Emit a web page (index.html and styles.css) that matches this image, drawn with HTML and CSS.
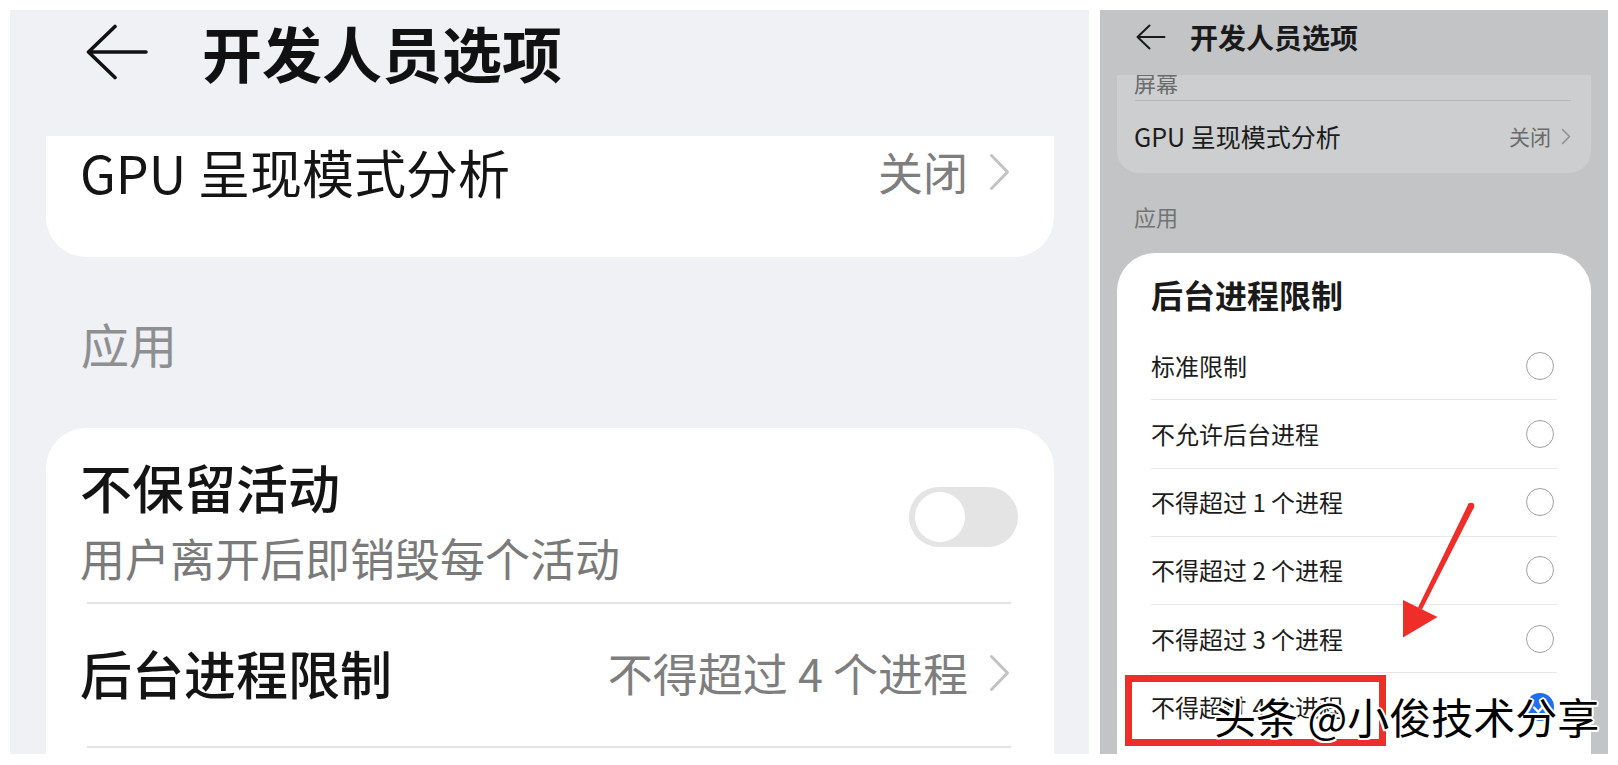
FILE: index.html
```html
<!DOCTYPE html>
<html lang="zh-CN">
<head>
<meta charset="utf-8">
<title>开发人员选项</title>
<link rel="stylesheet" href="styles.css">
</head>
<body>
<div class="screen">
  <section class="panel panel-left">
    <header class="topbar-l">
      <svg class="back-l" viewBox="0 0 62 56" width="62" height="56"><path d="M2.5 28 L29 2.5 M2.5 28 L29 53.5 M2.5 28 L60 28" fill="none" stroke="#111" stroke-width="3.6" stroke-linecap="round" stroke-linejoin="round"/></svg>
      <h1 class="title-l">开发人员选项</h1>
    </header>
    <div class="card-l card-gpu">
      <div class="row-l row-gpu">
        <span class="label-l">GPU 呈现模式分析</span>
        <span class="value-l">关闭</span>
        <svg class="chev-l" viewBox="0 0 23 38" width="23" height="38"><path d="M3.5 2.5 L19.5 19 L3.5 35.5" fill="none" stroke="#c3c3c3" stroke-width="3" stroke-linecap="round" stroke-linejoin="round"/></svg>
      </div>
    </div>
    <div class="section-l">应用</div>
    <div class="card-l card-apps">
      <div class="row-toggle">
        <div class="texts">
          <div class="t-title">不保留活动</div>
          <div class="t-sub">用户离开后即销毁每个活动</div>
        </div>
        <div class="switch"><span class="knob"></span></div>
      </div>
      <div class="divider-l"></div>
      <div class="row-l row-limit">
        <span class="label-l t-medium">后台进程限制</span>
        <span class="value-l">不得超过 4 个进程</span>
        <svg class="chev-l" viewBox="0 0 23 38" width="23" height="38"><path d="M3.5 2.5 L19.5 19 L3.5 35.5" fill="none" stroke="#c3c3c3" stroke-width="3" stroke-linecap="round" stroke-linejoin="round"/></svg>
      </div>
      <div class="divider-l"></div>
    </div>
  </section>

  <section class="panel panel-right">
    <header class="topbar-r">
      <svg class="back-r" viewBox="0 0 30 26" width="30" height="26"><path d="M1.5 13 L13.5 1.5 M1.5 13 L13.5 24.5 M1.5 13 L28.5 13" fill="none" stroke="#1a1a1a" stroke-width="2" stroke-linecap="round" stroke-linejoin="round"/></svg>
      <h1 class="title-r">开发人员选项</h1>
    </header>
    <div class="card-r1">
      <div class="cap-r">屏幕</div>
      <div class="divider-r"></div>
      <div class="row-r">
        <span class="label-r">GPU 呈现模式分析</span>
        <span class="value-r">关闭</span>
        <svg class="chev-r" viewBox="0 0 10 17" width="10" height="17"><path d="M1.5 1.5 L8.5 8.5 L1.5 15.5" fill="none" stroke="#8f9092" stroke-width="1.6" stroke-linecap="round" stroke-linejoin="round"/></svg>
      </div>
    </div>
    <div class="section-r">应用</div>
    <div class="dialog">
      <div class="d-title">后台进程限制</div>
      <div class="opt"><span>标准限制</span><span class="radio"></span></div>
      <div class="opt"><span>不允许后台进程</span><span class="radio"></span></div>
      <div class="opt"><span>不得超过 1 个进程</span><span class="radio"></span></div>
      <div class="opt"><span>不得超过 2 个进程</span><span class="radio"></span></div>
      <div class="opt"><span>不得超过 3 个进程</span><span class="radio"></span></div>
      <div class="opt opt-last"><span>不得超过 4 个进程</span><span class="radio radio-on"><svg viewBox="0 0 28 28" width="28" height="28"><path d="M8 14.5 L12.3 18.8 L20.5 10" fill="none" stroke="#fff" stroke-width="2.4" stroke-linecap="round" stroke-linejoin="round"/></svg></span></div>
    </div>
  </section>
</div>

<div class="mark-box"></div>
<svg class="mark-arrow" viewBox="1395 498 85 145" width="85" height="145">
  <circle cx="1471" cy="506" r="3.3" fill="#ef2d29"/>
  <polygon points="1468.1,504.5 1473.9,507.5 1422,609.6 1418,607.6" fill="#ef2d29"/>
  <polygon points="1403,600 1437.5,617 1403,637.5" fill="#ef2d29"/>
</svg>
<div class="watermark">头条 @小俊技术分享</div>
</body>
</html>
```

FILE: styles.css
```css
html, body {
  margin: 0;
  padding: 0;
  background: #ffffff;
}

body {
  font-family: "Noto Sans CJK SC", "Noto Sans", sans-serif;
  width: 1618px;
  height: 765px;
  overflow: hidden;
}

.screen {
  display: flex;
  gap: 11px;
  padding: 10px;
  height: 765px;
  box-sizing: border-box;
}

.panel {
  flex: none;
  height: 744px;
  overflow: hidden;
  display: flex;
  flex-direction: column;
}

/* ---------- left panel ---------- */
.panel-left {
  width: 1079px;
  background: #eff1f5;
}

.topbar-l {
  flex: none;
  height: 84px;
  margin: 0 0 42px 0;
  padding-left: 76px;
  display: flex;
  align-items: center;
}

.back-l {
  flex: none;
  display: block;
}

.title-l {
  margin: 0 0 0 54px;
  font-size: 60px;
  line-height: 84px;
  font-weight: 700;
  color: #111111;
}

.card-l {
  flex: none;
  margin: 0 35px 0 36px;
  background: #ffffff;
  padding: 0 43px 0 34px;
  box-sizing: border-box;
}

.card-gpu {
  height: 121px;
  border-radius: 0 0 40px 40px;
}

.row-l {
  display: flex;
  align-items: center;
}

.row-gpu {
  height: 72px;
}

.label-l {
  flex: 1;
  font-size: 52px;
  line-height: 72px;
  color: #141414;
  white-space: nowrap;
}

.t-medium {
  font-weight: 500;
}

.value-l {
  font-size: 45px;
  line-height: 60px;
  color: #7e7e7e;
  white-space: nowrap;
}

.chev-l {
  flex: none;
  display: block;
  margin-left: 20px;
}

.section-l {
  flex: none;
  margin: 56px 0 55px 71px;
  font-size: 48px;
  line-height: 60px;
  color: #8e8f91;
}

.card-apps {
  flex: 1;
  border-radius: 40px 40px 0 0;
}

.row-toggle {
  display: flex;
  align-items: center;
  padding: 27px 0 15px 0;
}

.texts {
  flex: 1;
}

.t-title {
  font-size: 52px;
  line-height: 64px;
  font-weight: 500;
  color: #141414;
}

.t-sub {
  margin-top: 10px;
  font-size: 45px;
  line-height: 58px;
  color: #7a7a7a;
}

.switch {
  flex: none;
  width: 109px;
  height: 60px;
  border-radius: 30px;
  background: #e4e4e4;
  margin: 0 -7px 8px 0;
  display: flex;
  align-items: center;
  padding-left: 6px;
  box-sizing: border-box;
}

.knob {
  width: 50px;
  height: 50px;
  border-radius: 50%;
  background: #ffffff;
}

.divider-l {
  height: 2px;
  margin-left: 7px;
  background: #e2e2e2;
}

.row-limit {
  height: 142px;
  box-sizing: border-box;
  padding-bottom: 4px;
}

/* ---------- right panel ---------- */
.panel-right {
  width: 508px;
  background: #c3c4c6;
}

.topbar-r {
  flex: none;
  height: 54px;
  margin-bottom: 11px;
  padding-left: 36px;
  display: flex;
  align-items: center;
}

.back-r {
  flex: none;
  display: block;
}

.title-r {
  margin: 0 0 0 24px;
  font-size: 28px;
  line-height: 40px;
  font-weight: 700;
  color: #1a1a1a;
}

.card-r1 {
  flex: none;
  height: 98px;
  margin: 0 17px;
  padding: 0 20px 0 17px;
  background: #cdcecf;
  border-radius: 0 0 22px 22px;
  overflow: hidden;
  box-sizing: border-box;
}

.cap-r {
  margin-top: -6px;
  font-size: 22px;
  line-height: 26px;
  color: #6a6b6c;
}

.divider-r {
  margin: 5px 0 0 1px;
  height: 1px;
  background: #b5b6b8;
}

.row-r {
  height: 70px;
  display: flex;
  align-items: center;
}

.label-r {
  flex: 1;
  font-size: 25px;
  line-height: 36px;
  color: #1c1c1c;
  white-space: nowrap;
}

.value-r {
  font-size: 21px;
  line-height: 30px;
  color: #6a6b6c;
}

.chev-r {
  flex: none;
  display: block;
  margin-left: 10px;
}

.section-r {
  flex: none;
  margin: 28px 0 22px 34px;
  font-size: 22px;
  line-height: 30px;
  color: #727375;
}

.dialog {
  flex: 1;
  margin: 0 17px;
  padding: 19px 34px 0 34px;
  background: #ffffff;
  border-radius: 38px 38px 0 0;
}

.d-title {
  font-size: 32px;
  line-height: 44px;
  font-weight: 700;
  color: #1a1a1a;
  margin-bottom: 16px;
}

.opt {
  height: 68.25px;
  box-sizing: border-box;
  border-bottom: 1px solid #e6e6e6;
  display: flex;
  align-items: center;
  justify-content: space-between;
  font-size: 24px;
  line-height: 34px;
  color: #1c1c1c;
}

.opt-last {
  border-bottom: none;
}

.radio {
  flex: none;
  width: 28px;
  height: 28px;
  margin-right: 3px;
  border: 1.5px solid #a2a2a2;
  border-radius: 50%;
  box-sizing: border-box;
}

.radio-on {
  border: none;
  background: #1f6ff2;
}

.radio-on svg {
  display: block;
}

/* ---------- annotations ---------- */
.mark-box {
  position: absolute;
  left: 1125px;
  top: 675px;
  width: 261px;
  height: 71px;
  border: 7px solid #ef2d29;
  box-sizing: border-box;
}

.mark-arrow {
  position: absolute;
  left: 1395px;
  top: 498px;
}

.watermark {
  position: absolute;
  left: 1214px;
  top: 691px;
  font-size: 42px;
  line-height: 50px;
  color: #000000;
  white-space: nowrap;
  text-shadow:
    2px 0 0 #fff, -2px 0 0 #fff, 0 2px 0 #fff, 0 -2px 0 #fff,
    1.5px 1.5px 0 #fff, -1.5px 1.5px 0 #fff, 1.5px -1.5px 0 #fff, -1.5px -1.5px 0 #fff;
}
```
